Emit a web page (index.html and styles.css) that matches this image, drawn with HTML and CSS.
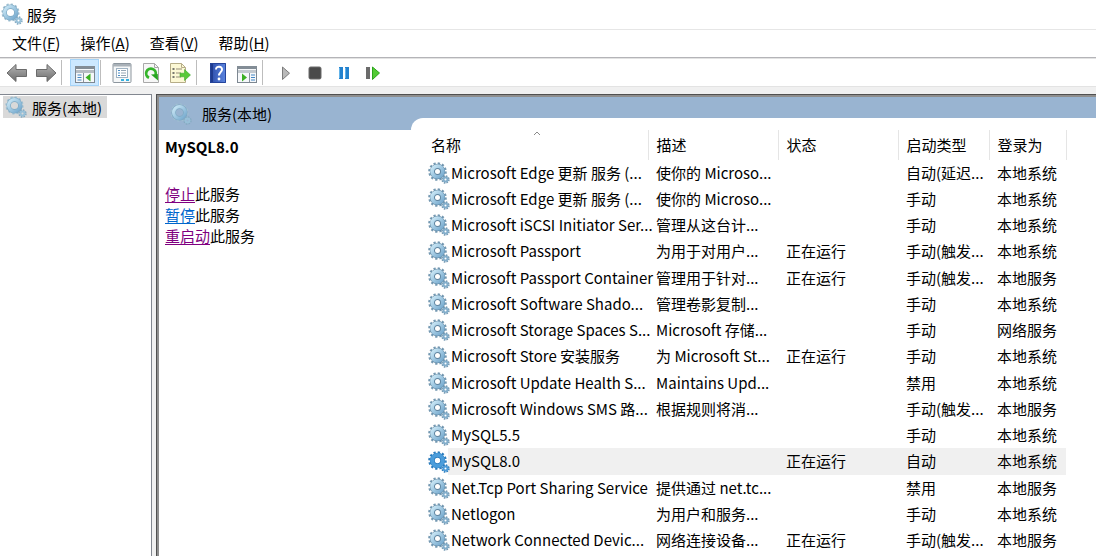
FILE: index.html
```html
<!DOCTYPE html>
<html lang="zh-CN">
<head>
<meta charset="utf-8">
<title>服务</title>
<link rel="stylesheet" href="styles.css">
</head>
<body>
<svg class="defs" aria-hidden="true">
  <defs>
    <linearGradient id="steel" x1="0" y1="0" x2="1" y2="1"><stop offset="0" stop-color="#cbe8f6"/><stop offset="1" stop-color="#74a8cd"/></linearGradient>
    <linearGradient id="arrow" x1="0" y1="0" x2="0" y2="1"><stop offset="0" stop-color="#b5b5b5"/><stop offset="1" stop-color="#6c6c6c"/></linearGradient>
    <linearGradient id="book" x1="0" y1="0" x2="1" y2="0"><stop offset="0" stop-color="#2a4aa8"/><stop offset="1" stop-color="#5c86e0"/></linearGradient>
  </defs>
  <symbol id="gear" viewBox="0 0 22 22">
    <circle cx="9.500" cy="9.500" r="8" fill="none" stroke="#7599b2" stroke-width="2.600" stroke-dasharray="2.200 1.990"/>
    <circle cx="9.500" cy="9.500" r="5.100" fill="none" stroke="#5f849f" stroke-width="5.200"/>
    <circle cx="9.500" cy="9.500" r="5.400" fill="none" stroke="url(#steel)" stroke-width="3.800"/>
    <circle cx="17.500" cy="17.500" r="3.200" fill="none" stroke="#7599b2" stroke-width="2" stroke-dasharray="1.500 1.010"/>
    <circle cx="17.500" cy="17.500" r="2" fill="none" stroke="#83aecb" stroke-width="2"/>
  </symbol>
  <symbol id="gear-light" viewBox="0 0 22 22">
    <circle cx="9.500" cy="9.500" r="7.800" fill="none" stroke="#a0bfd1" stroke-width="2.600" stroke-dasharray="2.100 1.984"/>
    <circle cx="9.500" cy="9.500" r="5.800" fill="none" stroke="#7ca7c1" stroke-width="4.400"/>
    <circle cx="9.500" cy="9.500" r="5.900" fill="none" stroke="url(#steel)" stroke-width="3.200"/>
    <circle cx="17.500" cy="17.500" r="3.200" fill="none" stroke="#84a9c0" stroke-width="2" stroke-dasharray="1.500 1.010"/>
    <circle cx="17.500" cy="17.500" r="2" fill="none" stroke="#98c0d8" stroke-width="2"/>
  </symbol>
  <symbol id="gear-selected" viewBox="0 0 22 22">
    <circle cx="9.500" cy="9.500" r="8" fill="none" stroke="#2d7dbd" stroke-width="2.600" stroke-dasharray="2.200 1.990"/>
    <circle cx="9.500" cy="9.500" r="5.200" fill="none" stroke="#2878b9" stroke-width="5"/>
    <circle cx="9.500" cy="9.500" r="5.400" fill="none" stroke="#4b9ddb" stroke-width="4"/>
    <circle cx="17.500" cy="17.500" r="3.200" fill="none" stroke="#2d7dbd" stroke-width="2" stroke-dasharray="1.500 1.010"/>
    <circle cx="17.500" cy="17.500" r="2" fill="none" stroke="#4c9bd8" stroke-width="2"/>
  </symbol>
</svg>

<header class="titlebar">
  <svg class="gear"><use href="#gear-light"/></svg>
  <span>服务</span>
</header>

<nav class="menubar">
  <button type="button">文件(<u>F</u>)</button>
  <button type="button">操作(<u>A</u>)</button>
  <button type="button">查看(<u>V</u>)</button>
  <button type="button">帮助(<u>H</u>)</button>
</nav>

<div class="toolbar" role="toolbar">
  <button type="button" aria-label="后退"><svg viewBox="0 0 22 22"><path d="M1 11 10 2.500V7.500H20.500V14.500H10V19.500Z" fill="url(#arrow)" stroke="#6b6b6b"/></svg></button>
  <button type="button" aria-label="前进"><svg viewBox="0 0 22 22"><path d="M21 11 12 2.500V7.500H1.500V14.500H12V19.500Z" fill="url(#arrow)" stroke="#6b6b6b"/></svg></button>
  <i class="sep after-nav"></i>
  <button type="button" class="on" aria-label="显示/隐藏控制台树"><svg viewBox="0 0 22 22"><rect x="1.500" y="4.500" width="19" height="16" fill="#f6f8fa" stroke="#7d8791"/><path d="M1 4h20v3H1z" fill="#838d96"/><path d="M2 8h18v3H2z" fill="#b5bcc3"/><path d="M9.500 11v9" stroke="#8a949d"/><path d="M3.500 13h4M3.500 15.500h4M3.500 18h4" stroke="#4386c4"/><path d="M16.500 11.500v8L11.500 15.500z" fill="#3bb022"/></svg></button>
  <i class="sep"></i>
  <button type="button" class="props" aria-label="属性"><svg viewBox="0 0 22 22"><rect x="2" y="1.500" width="18" height="19" rx="1" fill="#f5f7f8" stroke="#8d969e"/><path d="M2 2h18v2.500H2z" fill="#a9b1b8"/><rect x="5.500" y="6.500" width="11" height="9" fill="#fff" stroke="#a0b3c3"/><path d="M7 8.500h2M7 11h2M7 13.500h2" stroke="#478bc6"/><path d="M10 8.500h5M10 11h5M10 13.500h5" stroke="#96a7b5"/><path d="M10 18h3M15 18h3" stroke="#36b1df" stroke-width="2"/></svg></button>
  <button type="button" aria-label="刷新"><svg viewBox="0 0 22 22"><path d="M3.500 1.500h11l4 4v15h-15z" fill="#f7f7f7" stroke="#a9a9a9"/><path d="M14.500 1.500v4h4" fill="none" stroke="#a9a9a9"/><path d="M9 15.800A4.800 4.800 0 1 1 15.500 13" fill="none" stroke="#35b52b" stroke-width="2.800"/><path d="M11 12.500 17.800 12l.2 6.500z" fill="#28a321"/></svg></button>
  <button type="button" aria-label="导出列表"><svg viewBox="0 0 22 22"><path d="M1.500 1.500h11l4 4v15h-15z" fill="#fcf8d5" stroke="#b6ad88"/><path d="M12.500 1.500v4h4" fill="none" stroke="#b6ad88"/><path d="M3.500 7h2M3.500 11h2M3.500 15h2" stroke="#4d4d4d" stroke-width="1.500"/><path d="M7 7h6M7 11h5M7 15h5" stroke="#958d79"/><path d="M11 11.200h4.500V7.500L21.500 13l-6 5.500V14.800H11z" fill="#59c938" stroke="#2da01f" stroke-width=".5"/></svg></button>
  <i class="sep after-export"></i>
  <button type="button" class="help" aria-label="帮助"><svg viewBox="0 0 22 22"><rect x="3" y="1" width="16" height="20" fill="url(#book)"/><path d="M3 1h3v20H3z" fill="#1f3b8f"/><path d="M3.500 1.500h15v19h-15z" fill="none" stroke="#25449b"/><path d="M9 7.500C9 3.500 15.500 4 15 7.800 14.700 10 12 10.500 12 13.500" fill="none" stroke="#fff" stroke-width="2"/><circle cx="12" cy="17" r="1.400" fill="#fff"/></svg></button>
  <button type="button" aria-label="显示/隐藏操作窗格"><svg viewBox="0 0 22 22"><rect x="1.500" y="4.500" width="19" height="16" fill="#f6f8fa" stroke="#7d8791"/><path d="M1 4h20v3H1z" fill="#838d96"/><path d="M2 8h18v3H2z" fill="#c3c9cf"/><path d="M13.500 11v9" stroke="#8a949d"/><path d="M15 13h4M15 15.500h4M15 18h4" stroke="#4386c4"/><path d="M6 11.500v8L11 15.500z" fill="#3bb022"/></svg></button>
  <i class="sep"></i>
  <button type="button" class="start" aria-label="启动服务"><svg viewBox="0 0 22 22"><path d="M7.500 5v12.500L14.500 11.200z" fill="#b9b9b9" stroke="#7c7c7c"/></svg></button>
  <button type="button" aria-label="停止服务"><svg viewBox="0 0 22 22"><rect x="5" y="5" width="12" height="12" rx="1.500" fill="#4a4a4a" stroke="#6b6b6b"/></svg></button>
  <button type="button" aria-label="暂停服务"><svg viewBox="0 0 22 22"><path d="M6 5h4v12H6zM12 5h4v12h-4z" fill="#2482ce"/><path d="M6.500 6v10M12.500 6v10" stroke="#63b3e9"/></svg></button>
  <button type="button" aria-label="重启动服务"><svg viewBox="0 0 22 22"><path d="M4 5h4v12H4z" fill="#6b6b6b"/><path d="M10.500 5v12.500L17.500 11z" fill="#52ca34" stroke="#2ba51c"/></svg></button>
</div>

<main class="workspace">
  <aside class="tree">
    <button type="button" class="node"><svg class="gear"><use href="#gear-light"/></svg>服务(本地)</button>
  </aside>

  <section class="pane">
    <header class="pane-head"><svg class="gear"><use href="#gear-light"/></svg><h1>服务(本地)</h1></header>
    <div class="pane-body">
      <div class="detail">
        <h2>MySQL8.0</h2>
        <p><a class="visited" href="#stop">停止</a>此服务</p>
        <p><a href="#pause">暂停</a>此服务</p>
        <p><a class="visited" href="#restart">重启动</a>此服务</p>
      </div>
      <div class="list">
        <table>
          <colgroup><col class="c-icon"><col class="c-name"><col class="c-desc"><col class="c-state"><col class="c-start"><col class="c-logon"></colgroup>
          <thead><tr><th colspan="2" class="sorted">名称<svg class="caret" viewBox="0 0 8 5"><path d="M1 4 4 1l3 3" fill="none" stroke="#8a8a8a"/></svg></th><th>描述</th><th>状态</th><th>启动类型</th><th>登录为</th></tr></thead>
          <tbody>
            <tr><td><svg class="gear"><use href="#gear"/></svg></td><td>Microsoft Edge 更新 服务 (...</td><td>使你的 Microso...</td><td></td><td>自动(延迟...</td><td>本地系统</td></tr>
            <tr><td><svg class="gear"><use href="#gear"/></svg></td><td>Microsoft Edge 更新 服务 (...</td><td>使你的 Microso...</td><td></td><td>手动</td><td>本地系统</td></tr>
            <tr><td><svg class="gear"><use href="#gear"/></svg></td><td>Microsoft iSCSI Initiator Ser...</td><td>管理从这台计...</td><td></td><td>手动</td><td>本地系统</td></tr>
            <tr><td><svg class="gear"><use href="#gear"/></svg></td><td>Microsoft Passport</td><td>为用于对用户...</td><td>正在运行</td><td>手动(触发...</td><td>本地系统</td></tr>
            <tr><td><svg class="gear"><use href="#gear"/></svg></td><td>Microsoft Passport Container</td><td>管理用于针对...</td><td>正在运行</td><td>手动(触发...</td><td>本地服务</td></tr>
            <tr><td><svg class="gear"><use href="#gear"/></svg></td><td>Microsoft Software Shado...</td><td>管理卷影复制...</td><td></td><td>手动</td><td>本地系统</td></tr>
            <tr><td><svg class="gear"><use href="#gear"/></svg></td><td>Microsoft Storage Spaces S...</td><td>Microsoft 存储...</td><td></td><td>手动</td><td>网络服务</td></tr>
            <tr><td><svg class="gear"><use href="#gear"/></svg></td><td>Microsoft Store 安装服务</td><td>为 Microsoft St...</td><td>正在运行</td><td>手动</td><td>本地系统</td></tr>
            <tr><td><svg class="gear"><use href="#gear"/></svg></td><td>Microsoft Update Health S...</td><td>Maintains Upd...</td><td></td><td>禁用</td><td>本地系统</td></tr>
            <tr><td><svg class="gear"><use href="#gear"/></svg></td><td>Microsoft Windows SMS 路...</td><td>根据规则将消...</td><td></td><td>手动(触发...</td><td>本地服务</td></tr>
            <tr><td><svg class="gear"><use href="#gear"/></svg></td><td>MySQL5.5</td><td></td><td></td><td>手动</td><td>本地系统</td></tr>
            <tr class="selected"><td><svg class="gear"><use href="#gear-selected"/></svg></td><td>MySQL8.0</td><td></td><td>正在运行</td><td>自动</td><td>本地系统</td></tr>
            <tr><td><svg class="gear"><use href="#gear"/></svg></td><td>Net.Tcp Port Sharing Service</td><td>提供通过 net.tc...</td><td></td><td>禁用</td><td>本地服务</td></tr>
            <tr><td><svg class="gear"><use href="#gear"/></svg></td><td>Netlogon</td><td>为用户和服务...</td><td></td><td>手动</td><td>本地系统</td></tr>
            <tr><td><svg class="gear"><use href="#gear"/></svg></td><td>Network Connected Devic...</td><td>网络连接设备...</td><td>正在运行</td><td>手动(触发...</td><td>本地服务</td></tr>
          </tbody>
        </table>
      </div>
    </div>
  </section>
</main>
</body>
</html>
```
FILE: styles.css
```css
* { box-sizing: border-box; }

body {
  margin: 0;
  height: 100vh;
  display: flex;
  flex-direction: column;
  overflow: hidden;
  background: #f0f0f0;
  color: #000;
  font: 15px/21px "Noto Sans CJK SC", sans-serif;
}

button {
  padding: 0;
  border: 0;
  background: none;
  color: inherit;
  font: inherit;
}

.defs { position: absolute; width: 0; height: 0; }
.gear { display: block; flex: none; width: 22px; height: 22px; }

.titlebar {
  display: flex;
  align-items: center;
  gap: 4px;
  height: 29px;
  padding: 0 0 1px 1px;
  background: #fff;
}

.menubar {
  display: flex;
  gap: 20px;
  height: 29px;
  padding: 0 0 2px 12px;
  border-top: 1px solid #e6e6e6;
  border-bottom: 1px solid #b4b4b8;
  background: #fff;
}

.toolbar {
  display: flex;
  align-items: center;
  height: 29px;
  padding-left: 2px;
  border-top: 1px solid #e3e3e3;
  border-bottom: 1px solid #e3e3e3;
  background: #fff;
}
.toolbar button {
  display: grid;
  place-items: center;
  width: 29px;
  height: 27px;
}
.toolbar svg { width: 22px; height: 22px; }
.toolbar .on { border: 1px solid #a5d3f7; background: #cce8ff; }
.sep { width: 1px; height: 25px; margin: 0 4px 0 1px; background: #bdbdbd; }
.sep.after-nav { margin-right: 8px; }
.on + .sep { margin-right: 6px; }
.sep.after-export { margin-left: 2px; margin-right: 6px; }
.start { margin-left: 4px; }

.workspace {
  flex: 1;
  min-height: 0;
  display: flex;
  gap: 4px;
  margin-top: 7px;
}

.tree {
  width: 152px;
  padding: 1px 3px;
  border: 1px solid #828790;
  border-left: 0;
  border-bottom: 0;
  background: #fff;
}
.node {
  display: flex;
  align-items: center;
  gap: 5px;
  height: 22px;
  padding: 0 5px 0 2px;
  background: #d9d9d9;
}

.pane {
  flex: 1;
  min-width: 0;
  display: flex;
  flex-direction: column;
  padding: 2px 0 0 2px;
  border: 1px solid #505050;
  border-right: 0;
  border-bottom: 0;
  background: #8e8e8e;
}
.pane-head {
  display: flex;
  align-items: center;
  gap: 10px;
  height: 33px;
  padding-left: 11px;
  background: #99b4d1;
}
.pane-head h1 { margin: 0; font: inherit; }
.pane-body { flex: 1; min-height: 0; display: flex; background: #fff; }

.detail { width: 252px; padding: 6px; }
.detail h2 { margin: 0 0 26px; font-size: 15px; line-height: 21px; }
.detail p { margin: 0; }
.detail a { color: #0066cc; text-underline-offset: 2px; }
.detail a.visited { color: #800080; }

.list {
  flex: 1;
  min-width: 0;
  margin-top: -12px;
  padding-top: 12px;
  border-top-left-radius: 12px;
  background: #fff;
}

table { table-layout: fixed; width: 655px; border-collapse: collapse; }
.c-icon { width: 37px; }
.c-name { width: 200px; }
.c-desc { width: 130px; }
.c-state { width: 120px; }
.c-start { width: 91px; }
.c-logon { width: 77px; }

th, td { padding: 0 0 2px 8px; text-align: left; white-space: nowrap; }
th {
  height: 30px;
  border-right: 1px solid #e5e5e5;
  font-weight: normal;
}
th.sorted { position: relative; padding-left: 20px; }
.caret { position: absolute; top: 1px; left: 122px; width: 8px; height: 5px; }

td { height: 26px; }
tr:nth-child(4n) td { height: 27px; }
td:first-child { padding: 0 0 0 17px; }
td:nth-child(2) { padding-left: 3px; }
.selected td + td { background: #f0f0f0; }
```
